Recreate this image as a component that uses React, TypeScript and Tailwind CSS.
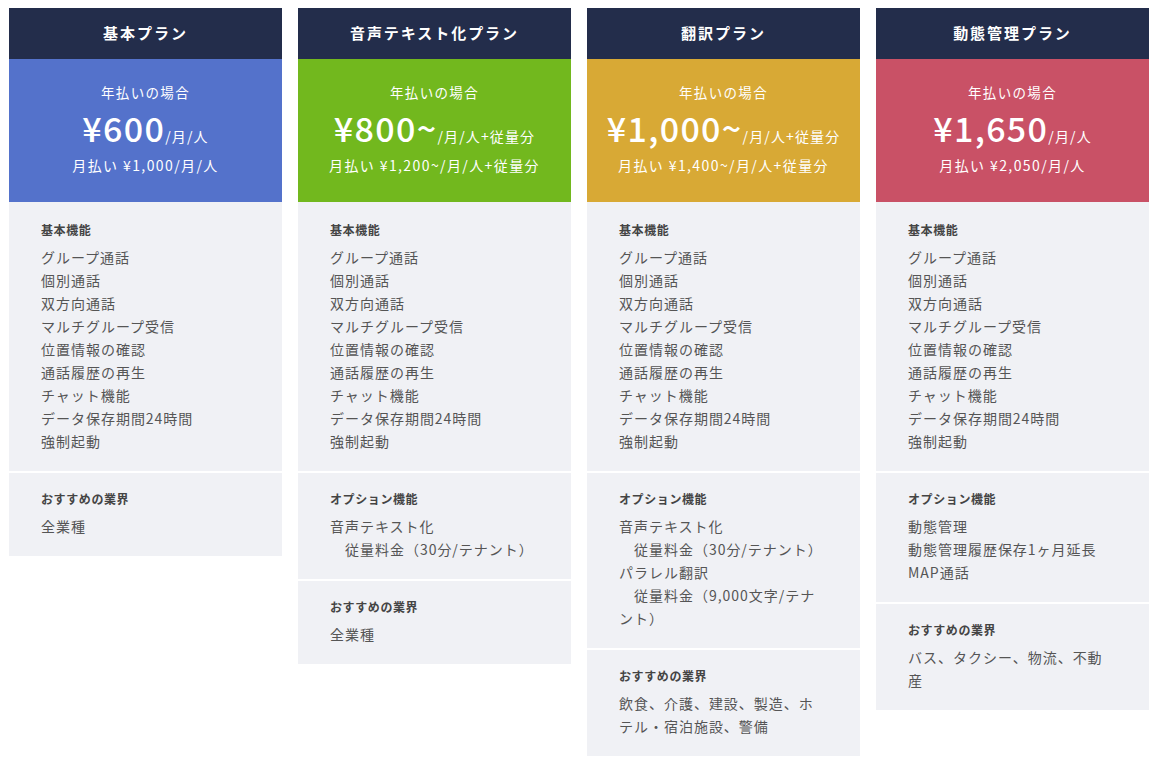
import React from "react";

type Section = { title: string; items: string[] };
type Plan = {
  name: string;
  color: string;
  price: string;
  unit: string;
  monthly: string;
  sections: Section[];
};

const basic = [
  "グループ通話",
  "個別通話",
  "双方向通話",
  "マルチグループ受信",
  "位置情報の確認",
  "通話履歴の再生",
  "チャット機能",
  "データ保存期間24時間",
  "強制起動",
];

const plans: Plan[] = [
  {
    name: "基本プラン",
    color: "bg-[#5472cb]",
    price: "¥600",
    unit: "/月/人",
    monthly: "月払い ¥1,000/月/人",
    sections: [
      { title: "基本機能", items: basic },
      { title: "おすすめの業界", items: ["全業種"] },
    ],
  },
  {
    name: "音声テキスト化プラン",
    color: "bg-[#72b81e]",
    price: "¥800~",
    unit: "/月/人+従量分",
    monthly: "月払い ¥1,200~/月/人+従量分",
    sections: [
      { title: "基本機能", items: basic },
      { title: "オプション機能", items: ["音声テキスト化", "　従量料金（30分/テナント）"] },
      { title: "おすすめの業界", items: ["全業種"] },
    ],
  },
  {
    name: "翻訳プラン",
    color: "bg-[#d8a935]",
    price: "¥1,000~",
    unit: "/月/人+従量分",
    monthly: "月払い ¥1,400~/月/人+従量分",
    sections: [
      { title: "基本機能", items: basic },
      {
        title: "オプション機能",
        items: [
          "音声テキスト化",
          "　従量料金（30分/テナント）",
          "パラレル翻訳",
          "　従量料金（9,000文字/テナント）",
        ],
      },
      { title: "おすすめの業界", items: ["飲食、介護、建設、製造、ホテル・宿泊施設、警備"] },
    ],
  },
  {
    name: "動態管理プラン",
    color: "bg-[#c95166]",
    price: "¥1,650",
    unit: "/月/人",
    monthly: "月払い ¥2,050/月/人",
    sections: [
      { title: "基本機能", items: basic },
      { title: "オプション機能", items: ["動態管理", "動態管理履歴保存1ヶ月延長", "MAP通話"] },
      { title: "おすすめの業界", items: ["バス、タクシー、物流、不動産"] },
    ],
  },
];

function PlanCard({ plan }: { plan: Plan }) {
  return (
    <div className="w-[273px] flex flex-col">
      <div className="h-[51px] bg-[#232d4b] flex items-center justify-center text-white text-[15px] font-bold tracking-[0.13em]">
        {plan.name}
      </div>
      <div className={`${plan.color} h-[143px] flex flex-col items-center pt-[23px] text-white`}>
        <div className="text-[13.5px] leading-[20px] tracking-[0.1em]">年払いの場合</div>
        <div className="mt-[5px] h-[42px] flex items-baseline">
          <span className="text-[34px] leading-[42px] font-medium tracking-[0.04em]">{plan.price}</span>
          <span className="text-[14px] tracking-[0.08em]">{plan.unit}</span>
        </div>
        <div className="mt-[5px] text-[14px] leading-[22px] tracking-[0.1em]">{plan.monthly}</div>
      </div>
      {plan.sections.map((s, i) => (
        <div
          key={s.title}
          className={`bg-[#f0f1f5] pl-[32px] pr-[32px] pb-[18px] ${i === 0 ? "pt-[18px]" : "mt-[2px] pt-[16px]"}`}
        >
          <div className="text-[12px] leading-[20px] font-bold text-[#444] tracking-[0.05em]">{s.title}</div>
          <div className="mt-[6px] text-[14px] leading-[23px] text-[#555] tracking-[0.07em]">
            {s.items.map((it) => (
              <div key={it}>{it}</div>
            ))}
          </div>
        </div>
      ))}
    </div>
  );
}

export default function App() {
  return (
    <div
      className="w-[1158px] h-[765px] bg-white pt-[8px] pl-[9px] flex items-start gap-[16px]"
      style={{ fontFamily: '"Noto Sans CJK JP", "Noto Sans", sans-serif' }}
    >
      {plans.map((p) => (
        <PlanCard key={p.name} plan={p} />
      ))}
    </div>
  );
}
